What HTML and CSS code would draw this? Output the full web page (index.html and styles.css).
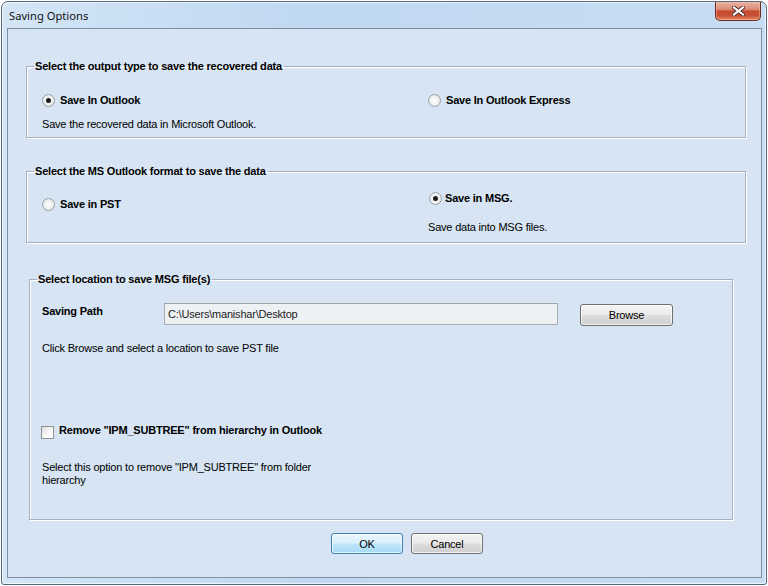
FILE: index.html
```html
<!DOCTYPE html>
<html lang="en">
<head>
    <meta charset="UTF-8">
    <title>Saving Options</title>
    <link rel="stylesheet" href="styles.css">
</head>
<body>
    <div class="window">
        <div class="titlebar">
            <span class="title">Saving Options</span>
            <button class="close" type="button" aria-label="Close">
                <svg width="13" height="10" viewBox="0 0 13 10">
                    <path d="M2 1.5 L11 8.5 M11 1.5 L2 8.5" stroke="#4a2a26" stroke-width="4" stroke-linecap="square"/>
                    <path d="M2 1.5 L11 8.5 M11 1.5 L2 8.5" stroke="#fff" stroke-width="2.2" stroke-linecap="square"/>
                </svg>
            </button>
        </div>

        <div class="client">
            <fieldset class="group group-type">
                <legend>Select the output type to save the recovered data</legend>
                <div class="cols">
                    <div class="col">
                        <label class="option"><span class="radio checked"></span>Save In Outlook</label>
                        <p class="hint hint-type">Save the recovered data in Microsoft Outlook.</p>
                    </div>
                    <div class="col">
                        <label class="option"><span class="radio"></span>Save In Outlook Express</label>
                    </div>
                </div>
            </fieldset>

            <fieldset class="group group-format">
                <legend>Select the MS Outlook format to save the data</legend>
                <div class="cols">
                    <div class="col col-pst">
                        <label class="option"><span class="radio"></span>Save in PST</label>
                    </div>
                    <div class="col">
                        <label class="option option-msg"><span class="radio checked"></span>Save in MSG.</label>
                        <p class="hint hint-msg">Save data into MSG files.</p>
                    </div>
                </div>
            </fieldset>

            <fieldset class="group group-location">
                <legend>Select location to save MSG file(s)</legend>
                <div class="path-row">
                    <span class="path-label">Saving Path</span>
                    <input class="path-input" type="text" value="C:\Users\manishar\Desktop" readonly>
                    <button class="btn btn-browse" type="button">Browse</button>
                </div>
                <p class="hint hint-browse">Click Browse and select a location to save PST file</p>

                <label class="option option-check"><span class="checkbox"></span>Remove "IPM_SUBTREE" from hierarchy in Outlook</label>
                <p class="hint hint-check">Select this option to remove "IPM_SUBTREE" from folder<br>hierarchy</p>
            </fieldset>

            <div class="actions">
                <button class="btn btn-default" type="button">OK</button>
                <button class="btn" type="button">Cancel</button>
            </div>
        </div>
    </div>
</body>
</html>
```

FILE: styles.css
```css
* {
    box-sizing: border-box;
}
body {
    margin: 0;
    background: #ffffff;
    font-family: "Liberation Sans", Arial, sans-serif;
    font-size: 11px;
    letter-spacing: -0.2px;
    color: #000;
}
.window {
    width: 766px;
    height: 584px;
    margin: 1px;
    border: 1px solid #55657a;
    border-radius: 7px 7px 3px 3px;
    background: linear-gradient(to right, #d3e5f6 0, #c0d8f1 40%, #c8ddf3 100%);
    box-shadow: inset 1px 1px 0 rgba(255, 255, 255, 0.7), inset -1px -1px 0 rgba(255, 255, 255, 0.7);
    padding: 0 4px 6px 5px;
    display: flex;
    flex-direction: column;
}
.titlebar {
    height: 26px;
    display: flex;
    justify-content: space-between;
    align-items: flex-start;
}
.title {
    font-family: "Noto Sans", "Liberation Sans", sans-serif;
    font-size: 11.2px;
    letter-spacing: 0;
    color: #111;
    margin: 6px 0 0 2px;
    line-height: 16px;
}
.close {
    width: 46px;
    height: 19px;
    margin: 0 1px 0 0;
    padding: 0;
    border: 1px solid #6e2c22;
    border-top: none;
    border-radius: 0 0 5px 5px;
    background: linear-gradient(to bottom, #eab3a3 0, #dc8c74 40%, #c64a30 52%, #c95034 75%, #e08c6c 100%);
    box-shadow: inset 0 0 0 1px rgba(255, 200, 180, 0.45);
    display: flex;
    align-items: center;
    justify-content: center;
}
.client {
    flex: 1;
    border: 1px solid #7d8fa3;
    background: #d6e4f3;
    display: flex;
    flex-direction: column;
}
.group {
    margin: 0;
    padding: 0;
    border: 1px solid #a6afba;
    box-shadow: 1px 1px 0 #ffffff, inset 1px 1px 0 #ffffff;
    min-width: 0;
}
.group legend {
    font-weight: bold;
    line-height: 13px;
    padding: 0 2px 0 1px;
}
.group-type {
    margin: 31px 15px 0 18px;
    padding: 21px 0 6px 15px;
}
.group-type legend {
    margin-left: -8px;
}
.group-format {
    margin: 27px 15px 0 18px;
    padding: 14px 0 8px 15px;
}
.group-format legend {
    margin-left: -8px;
}
.group-location {
    margin: 30px 28px 0 21px;
    padding: 17px 0 32px 12px;
}
.group-location legend {
    margin-left: -5px;
}
.cols {
    display: grid;
    grid-template-columns: 386px 1fr;
}
.col-pst {
    margin-top: 6px;
}
.option {
    display: flex;
    align-items: center;
    height: 13px;
    line-height: 13px;
    font-weight: bold;
}
.radio {
    width: 13px;
    height: 13px;
    margin-right: 5px;
    border-radius: 50%;
    border: 1px solid #9aa1a9;
    background: radial-gradient(circle at 50% 50%, #ffffff 0, #f2f2f2 45%, #d9dcdf 100%);
    display: flex;
    align-items: center;
    justify-content: center;
}
.radio.checked::after {
    content: "";
    width: 5px;
    height: 5px;
    border-radius: 50%;
    background: #1c1c1c;
}
.option-msg .radio {
    margin-left: 1px;
    margin-right: 3px;
}
.checkbox {
    width: 13px;
    height: 13px;
    margin-right: 5px;
    border: 1px solid #8e9296;
    background: linear-gradient(135deg, #dedede 0, #fbfbfb 60%, #ffffff 100%);
}
.hint {
    margin: 0;
    line-height: 13px;
}
.hint-type {
    margin-top: 11px;
}
.hint-msg {
    margin-top: 16px;
}
.path-row {
    display: flex;
    align-items: flex-start;
}
.path-label {
    width: 122px;
    margin-top: 2px;
    line-height: 13px;
    font-weight: bold;
}
.path-input {
    width: 394px;
    height: 22px;
    padding: 0 3px;
    border: 1px solid #a9adb3;
    border-top-color: #9ea3a8;
    background: #eef1f4;
    font-family: inherit;
    font-size: 11px;
    letter-spacing: -0.2px;
    color: #222;
    outline: none;
}
.btn {
    width: 72px;
    height: 21px;
    padding: 0;
    border: 1px solid #707070;
    border-radius: 3px;
    background: linear-gradient(to bottom, #f3f3f3 0, #ebebeb 48%, #dddddd 52%, #cfcfcf 100%);
    box-shadow: inset 0 0 0 1px rgba(255, 255, 255, 0.7);
    font-family: inherit;
    font-size: 11px;
    letter-spacing: -0.2px;
    color: #000;
}
.btn-browse {
    width: 93px;
    height: 22px;
    margin: 1px 0 0 22px;
}
.btn-default {
    border-color: #3c7fb1;
    background: linear-gradient(to bottom, #eaf6fd 0, #d9f0fc 48%, #bee6fd 52%, #a7d9f5 100%);
}
.hint-browse {
    margin-top: 16px;
}
.option-check {
    margin-top: 69px;
    padding-left: 0;
}
.option-check .checkbox {
    margin-left: -1px;
    margin-top: 3px;
}
.hint-check {
    margin-top: 24px;
}
.actions {
    display: flex;
    gap: 8px;
    margin: 13px 0 0 323px;
}
```
